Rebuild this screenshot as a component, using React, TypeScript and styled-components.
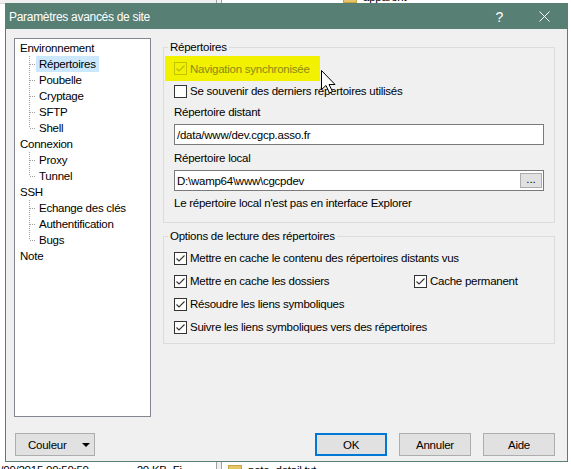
import React from 'react';
import styled, { createGlobalStyle } from 'styled-components';

const GlobalStyle = createGlobalStyle`
  html, body {
    margin: 0;
    padding: 0;
  }
  body {
    width: 571px;
    height: 469px;
    overflow: hidden;
    background: #ffffff;
    font-family: "Segoe UI", "Liberation Sans", Arial, sans-serif;
    color: #000;
  }
  * {
    box-sizing: border-box;
  }
`;

// fond : l'explorateur WinSCP derrière la boîte de dialogue
const Desktop = styled.div`
  position: relative;
  width: 571px;
  height: 469px;
  overflow: hidden;
  font-size: 11.5px;
  letter-spacing: -0.25px;
`;

const Backdrop = styled.div`
  display: flex;
  width: 100%;
  height: 100%;
`;

const Pane = styled.div<{ $width?: number }>`
  ${(p) => (p.$width ? `width: ${p.$width}px;` : 'flex: 1;')}
  background: #ffffff;
  display: flex;
  flex-direction: column;
  justify-content: space-between;
  overflow: hidden;
`;

const Splitter = styled.div`
  width: 6px;
  background: #f0f0f0;
  border-left: 1px solid #a0a0a0;
  border-right: 1px solid #a0a0a0;
`;

const PaneToolbar = styled.div`
  height: 4px;
  background: #f0f0f0;
  border-bottom: 1px solid #d9d9d9;
`;

const BgRow = styled.div<{ $edge: 'top' | 'bottom'; $indent: number }>`
  display: flex;
  align-items: center;
  gap: 6px;
  height: 16px;
  padding-left: ${(p) => p.$indent}px;
  white-space: nowrap;
  ${(p) => (p.$edge === 'top' ? 'margin-top: -11px;' : 'margin-bottom: -9px;')}
`;

const BgCell = styled.span<{ $width?: number; $align?: string }>`
  display: inline-block;
  ${(p) => (p.$width ? `width: ${p.$width}px;` : '')}
  text-align: ${(p) => p.$align || 'left'};
`;

const FolderGlyph = styled.span`
  width: 14px;
  height: 11px;
  background: #e8c468;
  border: 1px solid #c9a440;
`;

// boîte de dialogue
const Dialog = styled.div`
  position: absolute;
  left: 5px;
  top: 3px;
  width: 563px;
  height: 459px;
  border: 1px solid #587f74;
  background: #f0f0f0;
  display: flex;
  flex-direction: column;
`;

const TitleBar = styled.div`
  height: 25px;
  flex: none;
  display: flex;
  align-items: center;
  background: #587f74;
  color: #ffffff;
  padding-left: 3px;
  font-size: 12px;
  letter-spacing: -0.3px;
`;

const TitleText = styled.div`
  flex: 1;
`;

const TitleButton = styled.div`
  width: 45px;
  height: 25px;
  display: flex;
  align-items: center;
  justify-content: center;
  font-size: 14px;
  letter-spacing: 0;
`;

const Body = styled.div`
  flex: 1;
  display: flex;
  flex-direction: column;
  padding: 9px 12px 5px 8px;
`;

const Main = styled.div`
  display: flex;
  gap: 12px;
  height: 379px;
`;

const Tree = styled.ul`
  list-style: none;
  margin: 0;
  width: 137px;
  flex: none;
  padding: 1px 0 0 0;
  background: #ffffff;
  border: 1px solid #828790;
`;

const TreeRow = styled.li<{ $child?: boolean }>`
  display: flex;
  align-items: center;
  height: 16px;
  padding-left: ${(p) => (p.$child ? 14 : 2)}px;
  white-space: nowrap;
`;

const TreeLabel = styled.span<{ $selected?: boolean }>`
  padding: 0 3px;
  line-height: 16px;
  background: ${(p) => (p.$selected ? '#cce8ff' : 'transparent')};
`;

const RightCol = styled.div`
  flex: 1;
  display: flex;
  flex-direction: column;
`;

const GroupBox = styled.fieldset<{ $top: number; $bottom: number }>`
  margin: ${(p) => p.$top}px 0 0 0;
  padding: 0 10px ${(p) => p.$bottom}px 10px;
  border: 1px solid #dcdcdc;
  min-width: 0;
`;

const Legend = styled.legend`
  margin-left: -6px;
  padding: 0 2px;
  line-height: 15px;
`;

const Highlight = styled.div`
  margin: 1px 0 0 -9px;
  width: 155px;
  height: 25px;
  padding-left: 9px;
  display: flex;
  align-items: center;
  background: #f1f100;
`;

const CheckRow = styled.div<{ $gap?: number }>`
  display: flex;
  align-items: center;
  height: 16px;
  margin-top: ${(p) => p.$gap ?? 0}px;
`;

const CheckItem = styled.label<{ $width?: number; $disabled?: boolean }>`
  display: flex;
  align-items: center;
  gap: 3px;
  white-space: nowrap;
  ${(p) => (p.$width ? `width: ${p.$width}px;` : '')}
  color: ${(p) => (p.$disabled ? '#8b8b17' : '#000')};
`;

const FieldLabel = styled.div<{ $gap: number }>`
  line-height: 15px;
  margin-top: ${(p) => p.$gap}px;
  white-space: nowrap;
`;

const EditBox = styled.div`
  height: 21px;
  margin-top: 4px;
  display: flex;
  align-items: center;
  padding-left: 2px;
  background: #ffffff;
  border: 1px solid #7a7a7a;
`;

const EditText = styled.span`
  flex: 1;
`;

const BrowseButton = styled.div`
  width: 22px;
  height: 15px;
  margin-right: 1px;
  display: flex;
  align-items: flex-end;
  justify-content: center;
  padding-bottom: 2px;
  line-height: 1;
  letter-spacing: 0;
  background: #e1e1e1;
  border: 1px solid #adadad;
`;

const ButtonBar = styled.div`
  display: flex;
  align-items: center;
  gap: 12px;
  margin-top: 16px;
`;

const Spacer = styled.div`
  flex: 1;
`;

const Button = styled.div<{ $width?: number; $default?: boolean }>`
  width: ${(p) => p.$width ?? 72}px;
  height: 23px;
  display: flex;
  align-items: center;
  justify-content: center;
  background: #e1e1e1;
  border: ${(p) => (p.$default ? '2px solid #0078d7' : '1px solid #adadad')};
`;

const SplitButton = styled(Button)`
  margin-left: 1px;
  justify-content: space-between;
  padding: 0 4px 0 12px;
`;

const Caret = styled.span`
  width: 0;
  height: 0;
  border-left: 4px solid transparent;
  border-right: 4px solid transparent;
  border-top: 4px solid #000;
`;

const Cursor = styled.svg`
  position: absolute;
  left: 321px;
  top: 70px;
`;

const CheckBox: React.FC<{ checked?: boolean; disabled?: boolean }> = ({ checked, disabled }) => (
  <svg width="13" height="13" viewBox="0 0 13 13" style={{ flex: 'none' }}>
    <rect
      x="0.5"
      y="0.5"
      width="12"
      height="12"
      fill={disabled ? 'none' : '#ffffff'}
      stroke={disabled ? '#c4c400' : '#333333'}
    />
    {checked && (
      <path
        d="M2.5 6.5 L5 9 L10.5 3.5"
        fill="none"
        stroke={disabled ? '#b9b900' : '#333333'}
        strokeWidth="1.1"
      />
    )}
  </svg>
);

const Connector: React.FC<{ last?: boolean }> = ({ last }) => (
  <svg width="7" height="16" viewBox="0 0 7 16" style={{ flex: 'none' }}>
    <line x1="0.5" y1="0" x2="0.5" y2={last ? 8 : 16} stroke="#a0a0a0" strokeDasharray="1 1" />
    <line x1="1" y1="8.5" x2="7" y2="8.5" stroke="#a0a0a0" strokeDasharray="1 1" />
  </svg>
);

const tree: { label: string; children?: string[] }[] = [
  { label: 'Environnement', children: ['Répertoires', 'Poubelle', 'Cryptage', 'SFTP', 'Shell'] },
  { label: 'Connexion', children: ['Proxy', 'Tunnel'] },
  { label: 'SSH', children: ['Echange des clés', 'Authentification', 'Bugs'] },
  { label: 'Note' },
];

const App: React.FC = () => {
  return (
    <>
      <GlobalStyle />
      <Desktop>
        <Backdrop>
          <Pane $width={216}>
            <PaneToolbar />
            <BgRow $edge="bottom" $indent={0}>
              <BgCell style={{ marginLeft: -12 }}>26/09/2015 09:50:50</BgCell>
              <BgCell $width={72} $align="right">20 KB</BgCell>
              <BgCell>Fi</BgCell>
            </BgRow>
          </Pane>
          <Splitter />
          <Pane>
            <BgRow $edge="top" $indent={121}>
              <FolderGlyph />
              <span>apparent</span>
            </BgRow>
            <BgRow $edge="bottom" $indent={6}>
              <FolderGlyph />
              <span>note_detail.txt</span>
            </BgRow>
          </Pane>
        </Backdrop>

        <Dialog>
          <TitleBar>
            <TitleText>Paramètres avancés de site</TitleText>
            <TitleButton>?</TitleButton>
            <TitleButton>
              <svg width="11" height="11" viewBox="0 0 11 11">
                <path d="M0.5 0.5 L10.5 10.5 M10.5 0.5 L0.5 10.5" stroke="#ffffff" strokeWidth="1" />
              </svg>
            </TitleButton>
          </TitleBar>

          <Body>
            <Main>
              <Tree>
                {tree.map((node) => (
                  <React.Fragment key={node.label}>
                    <TreeRow>
                      <TreeLabel>{node.label}</TreeLabel>
                    </TreeRow>
                    {node.children?.map((child, i) => (
                      <TreeRow $child key={child}>
                        <Connector last={i === node.children!.length - 1} />
                        <TreeLabel $selected={child === 'Répertoires'}>{child}</TreeLabel>
                      </TreeRow>
                    ))}
                  </React.Fragment>
                ))}
              </Tree>

              <RightCol>
                <GroupBox $top={2} $bottom={11}>
                  <Legend>Répertoires</Legend>
                  <Highlight>
                    <CheckItem $disabled>
                      <CheckBox checked disabled />
                      Navigation synchronisée
                    </CheckItem>
                  </Highlight>
                  <CheckRow $gap={2}>
                    <CheckItem>
                      <CheckBox />
                      Se souvenir des derniers répertoires utilisés
                    </CheckItem>
                  </CheckRow>
                  <FieldLabel $gap={6}>Répertoire distant</FieldLabel>
                  <EditBox>
                    <EditText>/data/www/dev.cgcp.asso.fr</EditText>
                  </EditBox>
                  <FieldLabel $gap={6}>Répertoire local</FieldLabel>
                  <EditBox>
                    <EditText>D:\wamp64\www\cgcpdev</EditText>
                    <BrowseButton>...</BrowseButton>
                  </EditBox>
                  <FieldLabel $gap={5}>Le répertoire local n'est pas en interface Explorer</FieldLabel>
                </GroupBox>

                <GroupBox $top={6} $bottom={8}>
                  <Legend>Options de lecture des répertoires</Legend>
                  <CheckRow $gap={6}>
                    <CheckItem>
                      <CheckBox checked />
                      Mettre en cache le contenu des répertoires distants vus
                    </CheckItem>
                  </CheckRow>
                  <CheckRow $gap={7}>
                    <CheckItem $width={240}>
                      <CheckBox checked />
                      Mettre en cache les dossiers
                    </CheckItem>
                    <CheckItem>
                      <CheckBox checked />
                      Cache permanent
                    </CheckItem>
                  </CheckRow>
                  <CheckRow $gap={7}>
                    <CheckItem>
                      <CheckBox checked />
                      Résoudre les liens symboliques
                    </CheckItem>
                  </CheckRow>
                  <CheckRow $gap={7}>
                    <CheckItem>
                      <CheckBox checked />
                      Suivre les liens symboliques vers des répertoires
                    </CheckItem>
                  </CheckRow>
                </GroupBox>
              </RightCol>
            </Main>

            <ButtonBar>
              <SplitButton $width={80}>
                <span>Couleur</span>
                <Caret />
              </SplitButton>
              <Spacer />
              <Button $default>OK</Button>
              <Button>Annuler</Button>
              <Button>Aide</Button>
            </ButtonBar>
          </Body>
        </Dialog>

        <Cursor width="15" height="24" viewBox="0 0 15 24">
          <path
            d="M0.5 0.5 V19.5 L5 15.5 L8.5 23 L11.5 21.5 L8 14.5 H14 Z"
            fill="#ffffff"
            stroke="#000000"
            strokeLinejoin="miter"
          />
        </Cursor>
      </Desktop>
    </>
  );
};

export default App;
